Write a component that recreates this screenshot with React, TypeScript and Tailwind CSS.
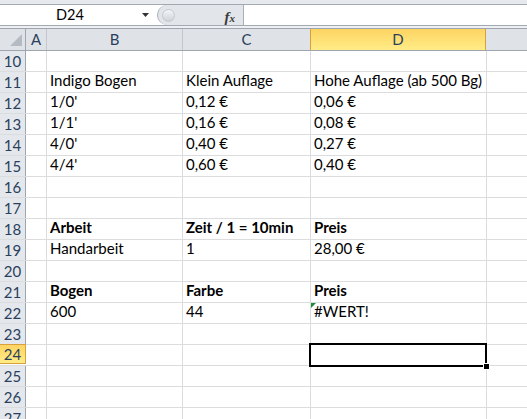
import React from 'react';

type Row = { n: number; b?: string; c?: string; d?: string; bold?: boolean };

const rows: Row[] = [
  { n: 10 },
  { n: 11, b: 'Indigo Bogen', c: 'Klein Auflage', d: 'Hohe Auflage (ab 500 Bg)' },
  { n: 12, b: "1/0'", c: '0,12 €', d: '0,06 €' },
  { n: 13, b: "1/1'", c: '0,16 €', d: '0,08 €' },
  { n: 14, b: "4/0'", c: '0,40 €', d: '0,27 €' },
  { n: 15, b: "4/4'", c: '0,60 €', d: '0,40 €' },
  { n: 16 },
  { n: 17 },
  { n: 18, b: 'Arbeit', c: 'Zeit / 1 = 10min', d: 'Preis', bold: true },
  { n: 19, b: 'Handarbeit', c: '1', d: '28,00 €' },
  { n: 20 },
  { n: 21, b: 'Bogen', c: 'Farbe', d: 'Preis', bold: true },
  { n: 22, b: '600', c: '44', d: '#WERT!' },
  { n: 23 },
  { n: 24 },
  { n: 25 },
  { n: 26 },
  { n: 27 },
];

const cell = 'h-full border-r border-[#dadcdd] flex items-end pl-[3px] pb-[1px] whitespace-nowrap overflow-visible';

function FormulaBar() {
  return (
    <>
      <div className="h-[4px] bg-[#e6e9ed]" />
      <div className="h-[22px] flex border-y border-[#a3a9b1] bg-white">
        <div className="w-[157px] flex items-center">
          <div className="w-[140px] text-center text-[14.5px] text-black">D24</div>
          <svg width="8" height="5" viewBox="0 0 8 5" className="ml-[2px]">
            <path d="M0 0 H7 L3.5 4 Z" fill="#333" />
          </svg>
        </div>
        <div className="w-[86px] h-full relative flex items-center rounded-l-full bg-[#e2e5e9] border-l border-[#a8aeb6]">
          <div className="ml-[4px] w-[13px] h-[13px] rounded-full bg-gradient-to-b from-[#f4f5f7] to-[#cfd3d9] border border-[#c4c9d0]" />
          <span className="absolute right-[8px] top-[1px] font-['Liberation_Serif',serif] italic font-bold text-[15px] text-[#3a3a3a]">
            f<span className="text-[11px]">x</span>
          </span>
        </div>
        <div className="flex-1 border-l border-[#a8aeb6]" />
      </div>
      <div className="h-[2px] bg-[#eef0f3]" />
    </>
  );
}

function Header() {
  const h = 'h-full flex items-center justify-center border-r border-[#c3c8cf] text-[15px] text-[#2b3f5c]';
  return (
    <div className="h-[23px] flex border-y border-[#9ea5ae] bg-[#dfe3e8]">
      <div className="w-[26px] h-full border-r border-[#9ea5ae] relative">
        <svg width="26" height="21" className="absolute left-0 top-0">
          <path d="M10 17 H22 V5 Z" fill="#b5bbc3" />
        </svg>
      </div>
      <div className={`w-[21px] ${h}`}>A</div>
      <div className={`w-[136px] ${h}`}>B</div>
      <div className={`w-[128px] ${h}`}>C</div>
      <div className="w-[176px] h-full flex items-center justify-center border-x border-[#d9a13e] bg-gradient-to-b from-[#fdd462] to-[#ffec86] text-[15px] text-[#2b3f5c] -ml-px">
        D
      </div>
      <div className="flex-1" />
    </div>
  );
}

export default function App() {
  return (
    <div className="w-[527px] h-[419px] overflow-hidden bg-white font-['Lato',sans-serif] relative">
      <FormulaBar />
      <Header />
      {rows.map((r) => {
        const sel = r.n === 24;
        return (
          <div key={r.n} className="h-[21px] flex border-b border-[#dadcdd] text-[15px] text-black">
            <div
              className={`w-[26px] h-full flex items-center justify-center border-r text-[15px] ${
                sel
                  ? 'bg-gradient-to-b from-[#fdd462] to-[#ffec86] border-[#d9a13e] border-y -mt-px h-[22px]'
                  : 'bg-[#e4e8ed] border-[#9ea5ae] text-[#2b3f5c]'
              } ${sel ? 'text-[#2b3f5c]' : ''}`}
            >
              {r.n}
            </div>
            <div className={`w-[21px] ${cell}`} />
            <div className={`w-[136px] ${cell} ${r.bold ? 'font-bold' : ''}`}>{r.b}</div>
            <div className={`w-[128px] ${cell} ${r.bold ? 'font-bold' : ''}`}>{r.c}</div>
            <div className={`w-[176px] ${cell} ${r.bold ? 'font-bold' : ''} relative ${sel ? 'z-10' : ''}`}>
              {r.n === 22 && (
                <svg width="6" height="6" className="absolute left-0 top-0">
                  <path d="M0 0 H5 L0 5 Z" fill="#1f8b3b" />
                </svg>
              )}
              {r.d}
              {sel && (
                <>
                  <div className="absolute -left-[2px] -top-[2px] -right-[1px] -bottom-[2px] border-2 border-black" />
                  <div className="absolute -right-[4px] -bottom-[5px] w-[7px] h-[7px] bg-black border border-white z-20" />
                </>
              )}
            </div>
            <div className="flex-1" />
          </div>
        );
      })}
    </div>
  );
}
